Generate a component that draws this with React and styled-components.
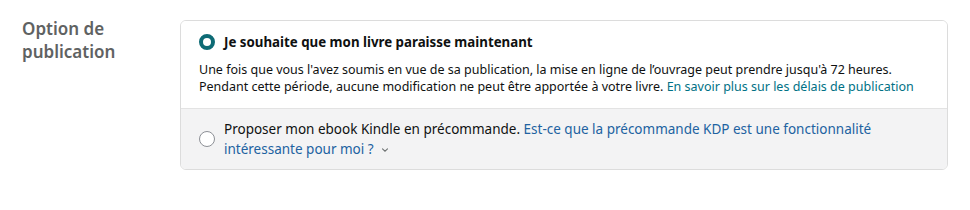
import styled, { createGlobalStyle } from "styled-components"

const Global = createGlobalStyle`
  body {
    margin: 0;
    background: #fff;
    font-family: "Noto Sans", "Open Sans", Arial, sans-serif;
    color: #0f1111;
  }
`

const Page = styled.div`
  display: grid;
  grid-template-columns: 158px 768px;
  padding: 20px 0 0 22px;
`

const Label = styled.h2`
  margin: -3px 0 0;
  font-size: 17px;
  font-weight: 600;
  line-height: 23px;
  color: #5f6262;
`

const Card = styled.div`
  border: 1px solid #dcdcdc;
  border-radius: 6px;
  overflow: hidden;
`

const Option = styled.div`
  display: flex;
  align-items: ${p => (p.$center ? "center" : "flex-start")};
  gap: 9px;
  padding: ${p => p.$pad};
  background: ${p => (p.$muted ? "#f3f3f4" : "#fff")};
  border-top: ${p => (p.$muted ? "1px solid #e3e3e3" : "none")};
`

const Radio = styled.span`
  flex: none;
  box-sizing: border-box;
  width: 16px;
  height: 16px;
  border-radius: 50%;
  background: #fff;
  border: ${p => (p.$checked ? "4.5px solid #0e6b75" : "1px solid #8d9096")};
  margin-top: ${p => p.$top || "0"};
`

const Body = styled.div`
  display: flex;
  flex-direction: column;
`

const Title = styled.div`
  font-size: 13.3px;
  font-weight: 700;
  line-height: 20px;
  margin-bottom: 9px;
`

const Desc = styled.p`
  margin: 0 0 0 -25px;
  font-size: 12.5px;
  line-height: 17px;
`

const Text = styled.p`
  margin: 0;
  font-size: 13.5px;
  line-height: 20px;
`

const Link = styled.a`
  color: ${p => p.$tone || "#007185"};
  text-decoration: none;
`

const Chevron = styled.svg`
  width: 8px;
  height: 8px;
  margin-left: 7px;
  vertical-align: middle;
`

export default function App() {
  return (
    <>
      <Global />
      <Page>
        <Label>
          Option de
          <br />
          publication
        </Label>
        <Card>
          <Option $pad="11px 18px 13px 18px">
            <Radio $checked $top="2px" />
            <Body>
              <Title>Je souhaite que mon livre paraisse maintenant</Title>
              <Desc>
                Une fois que vous l'avez soumis en vue de sa publication, la mise en ligne de l’ouvrage peut prendre jusqu'à 72 heures.
                <br />
                Pendant cette période, aucune modification ne peut être apportée à votre livre.{" "}
                <Link href="#">En savoir plus sur les délais de publication</Link>
              </Desc>
            </Body>
          </Option>
          <Option $muted $center $pad="10px 18px 10px 18px">
            <Radio />
            <Text>
              Proposer mon ebook Kindle en précommande.{" "}
              <Link href="#" $tone="#2162a1">
                Est-ce que la précommande KDP est une fonctionnalité
                <br />
                intéressante pour moi ?
                <Chevron viewBox="0 0 8 8">
                  <path d="M1.5 2.8 L4 5.2 L6.5 2.8" fill="none" stroke="#6f7373" strokeWidth="1.1" strokeLinecap="round" />
                </Chevron>
              </Link>
            </Text>
          </Option>
        </Card>
      </Page>
    </>
  )
}
